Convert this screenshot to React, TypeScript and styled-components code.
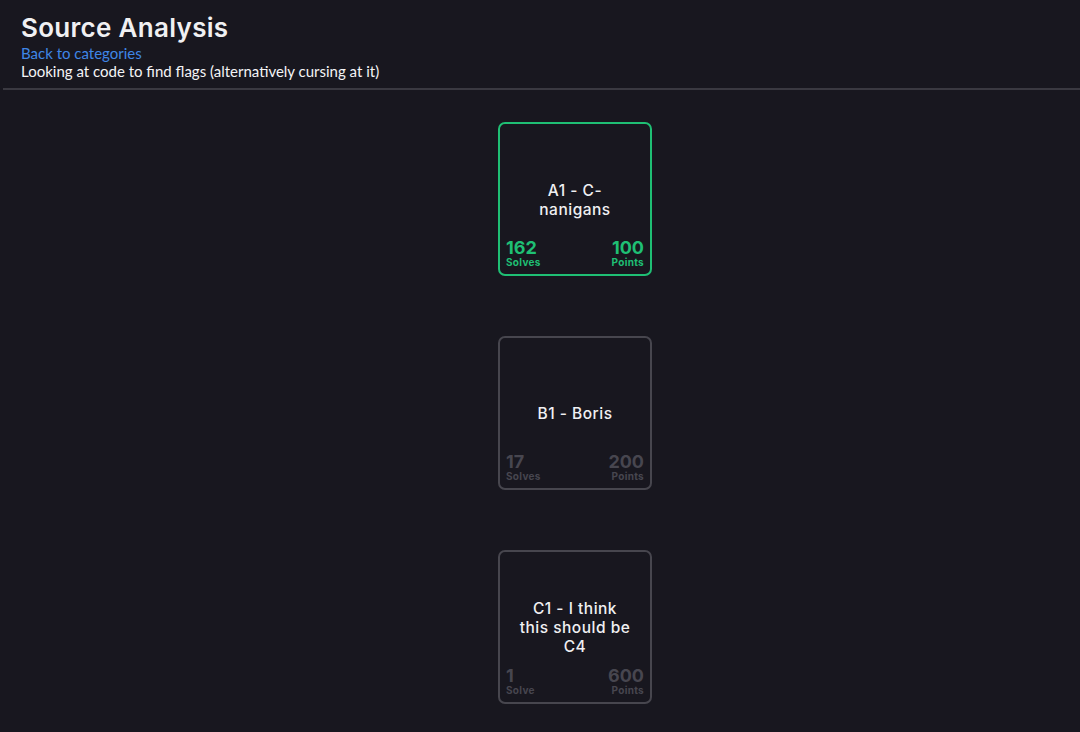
import React from "react";
import styled, { createGlobalStyle } from "styled-components";

const Global = createGlobalStyle`
  html, body { margin: 0; padding: 0; background: #18171f; }
  body { font-family: Lato, "Liberation Sans", sans-serif; color: #f2f2f4; }
`;

const Page = styled.div`
  min-height: 732px;
  background: #18171f;
  display: flex;
  flex-direction: column;
`;

const Header = styled.header`
  padding: 12px 0 8px 21px;
  display: flex;
  flex-direction: column;
`;

const Title = styled.h1`
  margin: 0;
  font-family: Inter, "Noto Sans", sans-serif;
  font-weight: 600;
  font-size: 26px;
  line-height: 32px;
  color: #f0f0f2;
  letter-spacing: 0.3px;
`;

const BackLink = styled.a`
  font-size: 15px;
  line-height: 18px;
  color: #3f86e6;
  text-decoration: none;
  cursor: pointer;
`;

const Description = styled.p`
  margin: 0;
  font-size: 15px;
  line-height: 18px;
  color: #f4f4f6;
`;

const Divider = styled.hr`
  margin: 0 0 0 3px;
  border: none;
  height: 2px;
  background: #3a3941;
`;

const List = styled.main`
  display: flex;
  flex-direction: column;
  align-items: center;
  gap: 60px;
  padding: 32px 0 0 70px;
`;

const Card = styled.div<{ $solved?: boolean }>`
  box-sizing: border-box;
  width: 154px;
  height: 154px;
  border: 2px solid ${(p) => (p.$solved ? "#1fbf74" : "#47464e")};
  border-radius: 7px;
  display: flex;
  flex-direction: column;
  padding: 0 6px 6px 6px;
  font-family: Inter, "Noto Sans", sans-serif;
`;

const CardTitle = styled.div`
  flex: 1;
  display: flex;
  align-items: center;
  justify-content: center;
  text-align: center;
  font-size: 15.5px;
  line-height: 19px;
  font-weight: 500;
  letter-spacing: 0.5px;
  color: #f0f0f2;
  padding: 36px 12px 0;
`;

const Stats = styled.div<{ $solved?: boolean }>`
  display: flex;
  justify-content: space-between;
  align-items: flex-end;
  color: ${(p) => (p.$solved ? "#1fbf74" : "#47464f")};
`;

const Stat = styled.div<{ $right?: boolean }>`
  display: flex;
  flex-direction: column;
  align-items: ${(p) => (p.$right ? "flex-end" : "flex-start")};
`;

const StatValue = styled.span`
  font-size: 18px;
  line-height: 17px;
  font-weight: 700;
`;

const StatLabel = styled.span`
  font-size: 10px;
  line-height: 12px;
  font-weight: 700;
  letter-spacing: 0.3px;
`;

const challenges = [
  { name: "A1 - C-nanigans", solves: 162, points: 100, solved: true },
  { name: "B1 - Boris", solves: 17, points: 200, solved: false },
  { name: "C1 - I think this should be C4", solves: 1, points: 600, solved: false },
];

export default function App() {
  return (
    <Page>
      <Global />
      <Header>
        <Title>Source Analysis</Title>
        <BackLink>Back to categories</BackLink>
        <Description>Looking at code to find flags (alternatively cursing at it)</Description>
      </Header>
      <Divider />
      <List>
        {challenges.map((c) => (
          <Card key={c.name} $solved={c.solved}>
            <CardTitle>{c.name}</CardTitle>
            <Stats $solved={c.solved}>
              <Stat>
                <StatValue>{c.solves}</StatValue>
                <StatLabel>{c.solves === 1 ? "Solve" : "Solves"}</StatLabel>
              </Stat>
              <Stat $right>
                <StatValue>{c.points}</StatValue>
                <StatLabel>Points</StatLabel>
              </Stat>
            </Stats>
          </Card>
        ))}
      </List>
    </Page>
  );
}
